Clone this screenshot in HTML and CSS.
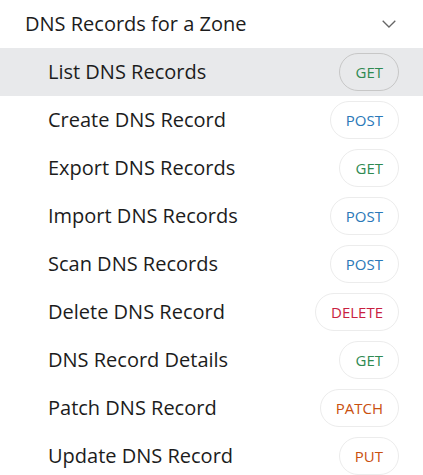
FILE: index.html
```html
<!DOCTYPE html>
<html>
<head>
<meta charset="utf-8">
<link rel="stylesheet" href="styles.css">
</head>
<body>
<nav class="sidebar">
  <div class="group-header">
    <span class="group-title">DNS Records for a Zone</span>
    <svg class="chevron" width="14" height="8" viewBox="0 0 14 8"><path d="M0.7 0.7 L7 7 L13.3 0.7" fill="none" stroke="#666" stroke-width="1.3"/></svg>
  </div>
  <ul class="items">
    <li class="item active"><span class="label">List DNS Records</span><span class="badge get">GET</span></li>
    <li class="item"><span class="label">Create DNS Record</span><span class="badge post">POST</span></li>
    <li class="item"><span class="label">Export DNS Records</span><span class="badge get">GET</span></li>
    <li class="item"><span class="label">Import DNS Records</span><span class="badge post">POST</span></li>
    <li class="item"><span class="label">Scan DNS Records</span><span class="badge post">POST</span></li>
    <li class="item"><span class="label">Delete DNS Record</span><span class="badge delete">DELETE</span></li>
    <li class="item"><span class="label">DNS Record Details</span><span class="badge get">GET</span></li>
    <li class="item"><span class="label">Patch DNS Record</span><span class="badge patch">PATCH</span></li>
    <li class="item"><span class="label">Update DNS Record</span><span class="badge put">PUT</span></li>
  </ul>
</nav>
</body>
</html>
```
FILE: styles.css
```css
html, body {
  margin: 0;
  padding: 0;
  background: #fff;
}
body {
  font-family: "Open Sans", "Noto Sans", sans-serif;
  color: #1c1c1c;
  overflow: hidden;
}
.sidebar {
  width: 423px;
}
.group-header {
  height: 48px;
  display: flex;
  align-items: center;
  justify-content: space-between;
  padding: 0 27px 0 25px;
}
.group-title {
  font-size: 20px;
  color: #1c1c1c;
  padding-bottom: 2px;
}
.chevron {
  display: block;
}
.items {
  list-style: none;
  margin: 0;
  padding: 0;
}
.item {
  height: 48px;
  display: flex;
  align-items: center;
  justify-content: space-between;
  padding: 0 24px 0 48px;
}
.item.active {
  background: #e8e9eb;
}
.label {
  font-size: 20px;
  color: #1c1c1c;
  padding-bottom: 2px;
}
.badge {
  height: 36px;
  box-sizing: content-box;
  display: flex;
  align-items: center;
  padding: 0 15px;
  border: 1px solid #ececec;
  border-radius: 19px;
  font-size: 15px;
  background: #fff;
}
.item.active .badge {
  background: transparent;
  border-color: #c7c7c7;
}
.get { color: #2f8a52; }
.post { color: #2a78b8; }
.delete { color: #c9203f; }
.patch { color: #c9500f; }
.put { color: #c9500f; }
```
